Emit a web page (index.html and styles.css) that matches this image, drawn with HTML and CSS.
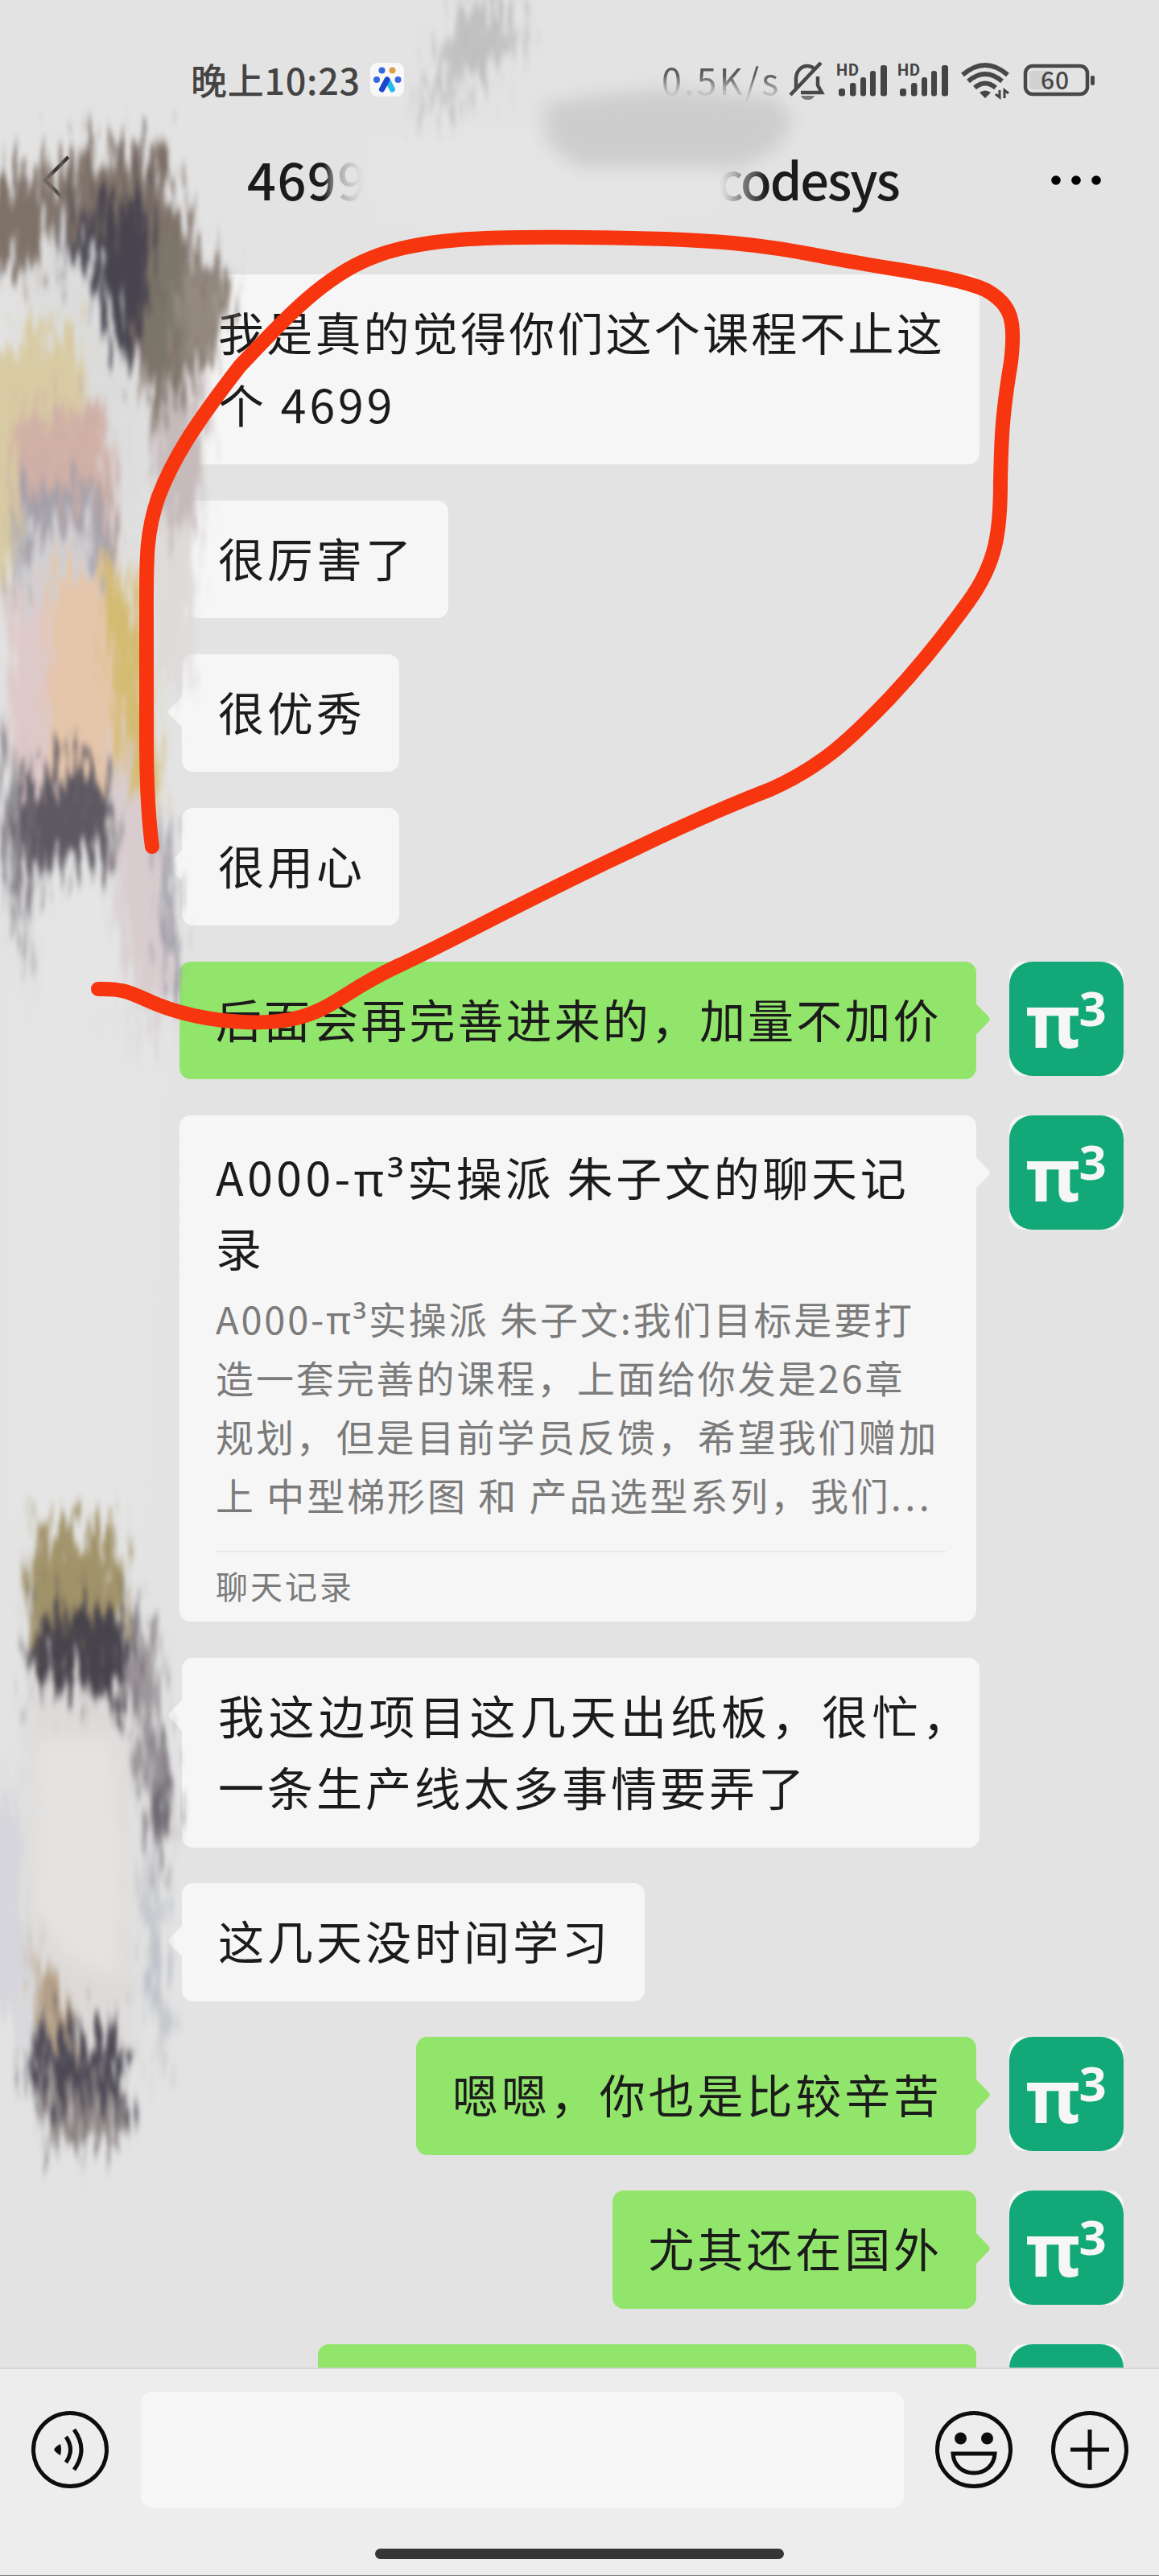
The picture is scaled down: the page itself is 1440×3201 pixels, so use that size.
FILE: index.html
```html
<!DOCTYPE html>
<html lang="zh-CN">
<head>
    <meta charset="UTF-8">
    <meta name="viewport" content="width=device-width, initial-scale=1.0">
    <title>codesys</title>
    <link rel="stylesheet" href="styles.css">
</head>
<body>
<div class="phone">
    <header class="top">
        <div class="status">
            <span class="time">晚上10:23</span>
            <svg class="paw" viewBox="0 0 42 42">
                <rect width="42" height="42" rx="9" fill="#f8f8f8"/>
                <circle cx="14.500" cy="9.500" r="4" fill="#3468e0"/>
                <circle cx="27.500" cy="9.500" r="4" fill="#dba046"/>
                <circle cx="8" cy="21" r="4" fill="#3468e0"/>
                <circle cx="34.500" cy="21" r="4" fill="#3468e0"/>
                <path d="M21 21L27.500 33" stroke="#25bce6" stroke-width="7" stroke-linecap="round"/>
                <path d="M21 21L14.500 33" stroke="#1b47cf" stroke-width="7" stroke-linecap="round"/>
            </svg>
            <span class="speed">0.5K/s</span>
            <svg class="sys" viewBox="980 72 384 54">
                <g fill="none" stroke="#484848" stroke-width="4.500">
                    <path d="M989 111V98c0-9 6-16 14-16 3 0 6 1 8 3M1016 95v11l5 9h-26M1020 78L982 118"/>
                </g>
                <path d="M995 119h17q-2 5-8.500 5t-8.500-5z" fill="#777"/>
                <g id="sim">
                    <text class="hd" x="1039" y="94">HD</text>
                    <g fill="#444">
                        <rect x="1042" y="110" width="8" height="9.500" rx="3"/>
                        <rect x="1056" y="103" width="7.500" height="16.500" rx="3"/>
                        <rect x="1069" y="96" width="7" height="23.500" rx="3"/>
                        <rect x="1081" y="88" width="7" height="31.500" rx="3"/>
                        <rect x="1094" y="81" width="8" height="38.500" rx="3"/>
                    </g>
                </g>
                <use href="#sim" x="76"/>
                <g fill="none" stroke="#484848" stroke-width="6">
                    <path d="M1196 93q28-24 56 0"/>
                    <path d="M1203 101q21-18 42 0"/>
                    <path d="M1211 109q13-11 26 0"/>
                </g>
                <path d="M1217 115q7-5 14 0l-7 7z" fill="#444"/>
                <path d="M1242 112v9l-5-4M1248 122v-10l5 4" fill="none" stroke="#444" stroke-width="3"/>
                <rect x="1279" y="88" width="27" height="23" rx="4" fill="#d2d2d2"/>
                <rect x="1274" y="82" width="77" height="35" rx="9" fill="none" stroke="#484848" stroke-width="4.500"/>
                <rect x="1355" y="94" width="5" height="12" rx="2" fill="#484848"/>
                <text class="pct" x="1293" y="110.500">60</text>
            </svg>
        </div>
        <div class="nav">
            <svg class="back" viewBox="0 0 36 64"><path d="M33 3L4 32L33 61" fill="none" stroke="#2a2a2a" stroke-width="4.500"/></svg>
            <span class="title-l">4699</span>
            <span class="title-r">codesys</span>
            <svg class="more" viewBox="0 0 64 14">
                <circle cx="7" cy="7" r="5.800"/><circle cx="32" cy="7" r="5.800"/><circle cx="57" cy="7" r="5.800"/>
            </svg>
        </div>
    </header>

    <main class="chat">
        <div class="row">
            <div class="bubble two">
                <p class="tight">我是真的觉得你们这个课程不止这</p>
                <p>个 4699</p>
            </div>
        </div>
        <div class="row"><div class="bubble">很厉害了</div></div>
        <div class="row"><div class="bubble">很优秀</div></div>
        <div class="row"><div class="bubble">很用心</div></div>
        <div class="row me">
            <div class="bubble full">后面会再完善进来的，加量不加价</div>
            <div class="avatar"><b>π<i>3</i></b></div>
        </div>
        <div class="row me">
            <div class="bubble card">
                <div class="card-title">
                    <p><span class="id">A000-<em>π³</em></span>实操派 朱子文的聊天记</p>
                    <p>录</p>
                </div>
                <div class="card-desc">
                    <p><span class="id">A000-<em>π³</em></span>实操派 朱子文:我们目标是要打</p>
                    <p>造一套完善的课程，上面给你发是26章</p>
                    <p>规划，但是目前学员反馈，希望我们赠加</p>
                    <p>上 中型梯形图 和 产品选型系列，我们<span class="dots">...</span></p>
                </div>
                <div class="card-foot">聊天记录</div>
            </div>
            <div class="avatar"><b>π<i>3</i></b></div>
        </div>
        <div class="row">
            <div class="bubble two">
                <p class="wide">我这边项目这几天出纸板，很忙，</p>
                <p>一条生产线太多事情要弄了</p>
            </div>
        </div>
        <div class="row"><div class="bubble">这几天没时间学习</div></div>
        <div class="row me">
            <div class="bubble">嗯嗯，你也是比较辛苦</div>
            <div class="avatar"><b>π<i>3</i></b></div>
        </div>
        <div class="row me">
            <div class="bubble">尤其还在国外</div>
            <div class="avatar"><b>π<i>3</i></b></div>
        </div>
        <div class="row me">
            <div class="bubble cut"></div>
            <div class="avatar"></div>
        </div>
    </main>

    <footer class="bar">
        <div class="tools">
            <svg class="ico" viewBox="0 0 100 100">
                <circle cx="50" cy="50" r="45.500"/>
                <path class="fill" d="M38 43q-6 3-8 7 2 4 8 7 2-7 0-14z"/>
                <path d="M45 34q11 16 0 32M55 25q18 25 0 50"/>
            </svg>
            <div class="input"></div>
            <svg class="ico face" viewBox="0 0 100 100">
                <circle cx="50" cy="50" r="45.500"/>
                <circle class="fill" cx="33.500" cy="36" r="7.500"/><circle class="fill" cx="66.500" cy="36" r="7.500"/>
                <path d="M24 55H76C75 70 64 79 50 79S25 70 24 55z"/>
            </svg>
            <svg class="ico plus" viewBox="0 0 100 100">
                <circle cx="50" cy="50" r="45.500"/>
                <path d="M50 25V75M26 50H74"/>
            </svg>
        </div>
        <div class="home"></div>
    </footer>

    <!-- brush marks over the chat -->
    <svg class="paint" viewBox="0 0 1440 3201">
        <defs>
            <filter id="brush" x="-30%" y="-30%" width="160%" height="160%" color-interpolation-filters="sRGB">
                <feGaussianBlur in="SourceGraphic" stdDeviation="6 13" result="b"/>
                <feTurbulence type="fractalNoise" baseFrequency="0.12 0.018" numOctaves="4" seed="4" result="n"/>
                <feColorMatrix in="n" type="matrix" values="0.3 0 0 0 0.35  0 1 0 0 0  0 0 1 0 0  0 0 0 0 1" result="m"/>
                <feDisplacementMap in="b" in2="m" scale="170" xChannelSelector="R" yChannelSelector="G" result="d"/>
                <feGaussianBlur in="d" stdDeviation="2.500 4"/>
            </filter>
            <filter id="soft" x="-30%" y="-30%" width="160%" height="160%">
                <feGaussianBlur stdDeviation="11"/>
            </filter>
        </defs>

        <g filter="url(#soft)">
            <path d="M452 170L700 160 900 205V262L700 290 470 280z" fill="#e5e5e5"/>
            <path d="M10 1080H190L205 1300 180 1900H10z" fill="#e5e5e5"/>
        </g>
        <path d="M505 138L550 60 575 5H640L662 45 612 85 555 112z" fill="#b4b4b4" opacity=".75" filter="url(#brush)"/>
        <path d="M675 130L740 118 830 110 965 122 985 150 965 185 920 208 720 208 680 180z" fill="#cdcdcd" filter="url(#soft)"/>

        <g filter="url(#brush)">
            <path d="M20 250H180L185 600 195 1000 212 1200 195 1290 30 1230 10 900z" fill="#e0dfdf"/>
            <path d="M-60 232L45 218 105 190H195L225 250 240 310 290 355 275 430 240 480 190 520 170 430 140 330 70 270 40 330-60 350z" fill="#7e7168"/>
            <path d="M190 500H258L245 650H195z" fill="#c6babb"/>
            <path d="M192 650H246L234 850H192z" fill="#dddad9"/>
            <path d="M185 300L225 310 232 400 195 500z" fill="#7b776a"/>
            <path d="M226 335L290 375 265 430 215 450z" fill="#958a80"/>
            <path d="M70 280L190 242 182 370 168 460 145 430 120 350 85 340z" fill="#47444f"/>
            <path d="M40 330L110 320 145 430 175 600 140 650 90 500 40 460z" fill="#dcdcdc"/>
            <path d="M-60 430L95 410 110 500 30 600 15 730H-60z" fill="#d8cba3"/>
            <path d="M20 520L130 505 142 620 145 710 20 690z" fill="#d0b0a6"/>
            <path d="M20 610L130 600 140 700 12 760z" fill="#a39ea8"/>
            <path d="M25 665L115 645 120 710 20 760z" fill="#d1d0d3"/>
            <path d="M10 740H70V970L15 980z" fill="#dec9c9"/>
            <path d="M60 710H125L160 960 60 965z" fill="#e5c6ab"/>
            <path d="M122 700L165 720 190 900 200 1000 165 980 138 860z" fill="#d4bb72"/>
            <path d="M140 930L185 980 205 1060 218 1230 175 1280 145 1100z" fill="#d8ccce"/>
            <path d="M22 975L75 955 130 960 145 1065 110 1055 30 1100z" fill="#5d5861"/>
            <path d="M6 900L22 980 35 1180 20 1160 5 1040z" fill="#87848a"/>
            <path d="M196 1010L208 1050 224 1210 208 1220z" fill="#8f8f9b"/>
            <path d="M45 1110L130 1085 160 1260 50 1240z" fill="#e5e5e5"/>
        </g>

        <g filter="url(#brush)">
            <path d="M-50 2230H25L35 2510-50 2500z" fill="#d5d5db"/>
            <path d="M30 2040H155L165 2500 155 2640 40 2600z" fill="#dddbd9"/>
            <path d="M37 1905L95 1895 147 1910 158 2050H35z" fill="#a09269"/>
            <path d="M33 2030L95 2000 155 2010 198 2070 180 2120 100 2090 35 2090z" fill="#47434c"/>
            <path d="M160 2010L190 2030 200 2150 215 2240 212 2320 192 2330 170 2180z" fill="#9b9599"/>
            <path d="M193 2140L213 2220 210 2310 200 2290z" fill="#5b5660"/>
            <path d="M175 2280L200 2400 210 2500 203 2580 185 2470z" fill="#bbbfc6"/>
            <path d="M32 2420L55 2450 95 2500 88 2545 50 2520z" fill="#b39e84"/>
            <path d="M32 2530L100 2530 164 2540 158 2615 90 2610 40 2595z" fill="#4b4854"/>
            <path d="M45 2600L155 2605 148 2655H58z" fill="#8c8484"/>
        </g>
        <path d="M45 2160H140L152 2300 148 2460 80 2430 40 2370z" fill="#e4e3e2" filter="url(#soft)"/>

        <path class="pen" d="M122 1229C155 1228 162 1234 195 1248C250 1270 340 1280 390 1258C420 1247 435 1228 495 1200C560 1170 650 1120 782 1058C840 1030 900 1003 957 981C1020 953 1055 920 1105 868C1150 820 1180 780 1203 748C1238 700 1243 660 1243 600C1244 540 1246 510 1256 450C1262 400 1258 378 1224 360C1190 345 1130 338 1063 326C960 308 930 296 720 295C600 294 520 296 460 321C400 345 350 400 298 455C240 530 215 570 197 617C180 665 182 700 182 780V915C182 970 184 1015 189 1052"/>
    </svg>
</div>
</body>
</html>
```
FILE: styles.css
```css
*{
    box-sizing: border-box;
}
body{
    margin: 0;
    background-color: #e3e3e3;
    color: #1b1b1b;
    font-family: "Noto Sans CJK SC", "Noto Sans", sans-serif;
}
p{
    margin: 0;
}
.phone{
    position: relative;
    width: 1440px;
    height: 3201px;
    overflow: hidden;
    display: flex;
    flex-direction: column;
}
.top{
    height: 312px;
    flex: none;
    border-bottom: 1px solid #dfdfdf;
}
.status{
    display: flex;
    align-items: center;
    height: 54px;
    margin-top: 72px;
    padding-left: 237px;
    color: #444;
}
.time, .speed{
    font-size: 45px;
    line-height: 54px;
    white-space: nowrap;
}
.time{
    width: 223px;
    font-weight: 500;
    letter-spacing: 0.7px;
}
.paw{
    width: 42px;
    height: 42px;
}
.speed{
    width: 158px;
    margin-left: 320px;
    letter-spacing: 3px;
    background: linear-gradient(#5c5c5c 40%, #b4b4b4 82%);
    -webkit-background-clip: text;
    color: transparent;
}
.sys{
    width: 384px;
    height: 54px;
}
.hd{
    font: bold 20px Roboto, sans-serif;
    fill: #444;
    letter-spacing: 1px;
}
.pct{
    font: 500 30px "Noto Sans CJK SC", sans-serif;
    fill: #484848;
    letter-spacing: 1px;
}
.nav{
    display: flex;
    align-items: center;
    height: 90px;
    margin-top: 53px;
    padding-left: 52px;
    font-size: 63px;
    font-weight: 500;
    line-height: 86px;
    white-space: nowrap;
}
.back{
    width: 36px;
    height: 64px;
}
.title-l{
    width: 586px;
    margin-left: 219px;
    margin-top: -4px;
    letter-spacing: 1.5px;
    background: linear-gradient(90deg, #1b1b1b 95px, #aaa 112px, #ddd 140px);
    -webkit-background-clip: text;
    color: transparent;
}
.title-r{
    width: 412px;
    margin-top: -4px;
    letter-spacing: -2px;
    text-indent: -2px;
    background: linear-gradient(90deg, #ddd, #1b1b1b 60px);
    -webkit-background-clip: text;
    color: transparent;
}
.more{
    width: 64px;
    height: 14px;
}

/* messages */
.chat{
    height: 2630px;
    flex: none;
    overflow: hidden;
    padding: 29px 44px 0 223px;
    display: flex;
    flex-direction: column;
    gap: 44.5px;
}
.row{
    display: flex;
    flex: none;
    padding-left: 3px;
}
.me{
    justify-content: flex-end;
    gap: 41px;
    padding-left: 0;
}
.bubble{
    position: relative;
    flex: none;
    height: 146.5px;
    padding: 26px 42px 26px 45px;
    border-radius: 14px;
    background-color: #f6f6f6;
    font-size: 57px;
    line-height: 89.5px;
    letter-spacing: 4px;
    white-space: nowrap;
}
.two{
    width: 991px;
    height: 236px;
}
.tight{
    letter-spacing: 3.2px;
}
.wide{
    letter-spacing: 5.5px;
}
.bubble::before{
    content: "";
    position: absolute;
    left: -17px;
    top: 52px;
    width: 18px;
    height: 40px;
    background-color: inherit;
    clip-path: polygon(100% 0, 10% 42%, 0 50%, 10% 58%, 100% 100%);
}
.me .bubble{
    background-color: #92e56b;
    letter-spacing: 3.9px;
}
.me .full{
    width: 990px;
    letter-spacing: 3.1px;
}
.me .bubble::before{
    left: auto;
    right: -17px;
    transform: scaleX(-1);
}
.me .card{
    width: 990px;
    height: 629.5px;
    padding: 31px 38px 0 45px;
    background-color: #f6f6f6;
    letter-spacing: 3.7px;
}
.card em{
    font-family: "Noto Sans", sans-serif;
    font-style: normal;
    line-height: 1;
}
.card .id{
    letter-spacing: 4.5px;
}
.card-title p{
    height: 88px;
    line-height: 88px;
}
.card-desc{
    margin-top: 8px;
    color: #7b7b7b;
    font-size: 47px;
    line-height: 73px;
    letter-spacing: 2.9px;
}
.card-desc p{
    height: 73px;
}
.card-desc .id{
    letter-spacing: 2.8px;
}
.dots{
    letter-spacing: 4.5px;
}
.card-foot{
    margin-top: 34px;
    padding-top: 10px;
    border-top: 2px solid #e9e9e9;
    color: #7b7b7b;
    font-size: 40px;
    line-height: 62px;
    letter-spacing: 3px;
}
.me .cut{
    width: 818px;
}
.avatar{
    width: 142px;
    height: 142px;
    flex: none;
    border-radius: 18px;
    background: #f5f5f5;
    overflow: hidden;
}
.avatar::before{
    content: "";
    display: block;
    height: 142px;
    border-radius: 29px;
    background-color: #13a878;
}
.avatar b{
    display: block;
    margin-top: -141px;
    padding-left: 20px;
    color: #f6f6f6;
    font: bold 92px/142px "Noto Sans", sans-serif;
    letter-spacing: -2px;
    white-space: nowrap;
}
.avatar i{
    font-size: 60px;
    font-style: normal;
    line-height: 0;
    vertical-align: 27px;
}

/* bottom bar */
.bar{
    flex: 1;
    background-color: #ededed;
    border-top: 2px solid #d6d6d6;
    border-bottom: 1px solid #777;
}
.tools{
    display: flex;
    align-items: center;
    padding: 28px 0 0 37px;
}
.input{
    width: 948px;
    height: 144px;
    margin-left: 38px;
    border-radius: 14px;
    background-color: #f6f6f6;
}
.ico{
    width: 100px;
    height: 100px;
    fill: none;
    stroke: #0d0d0d;
    stroke-width: 5;
}
.ico .fill{
    fill: #0d0d0d;
    stroke: none;
}
.face{
    margin-left: 37px;
}
.plus{
    margin-left: 44px;
}
.home{
    width: 508px;
    height: 13px;
    margin: 51px auto 0;
    border-radius: 7px;
    background-color: #363636;
}

/* drawing layer */
.paint{
    position: absolute;
    left: 0;
    top: 0;
    width: 1440px;
    height: 3201px;
}
.pen{
    fill: none;
    stroke: #f7350f;
    stroke-width: 18;
    stroke-linecap: round;
    stroke-linejoin: round;
}
```
